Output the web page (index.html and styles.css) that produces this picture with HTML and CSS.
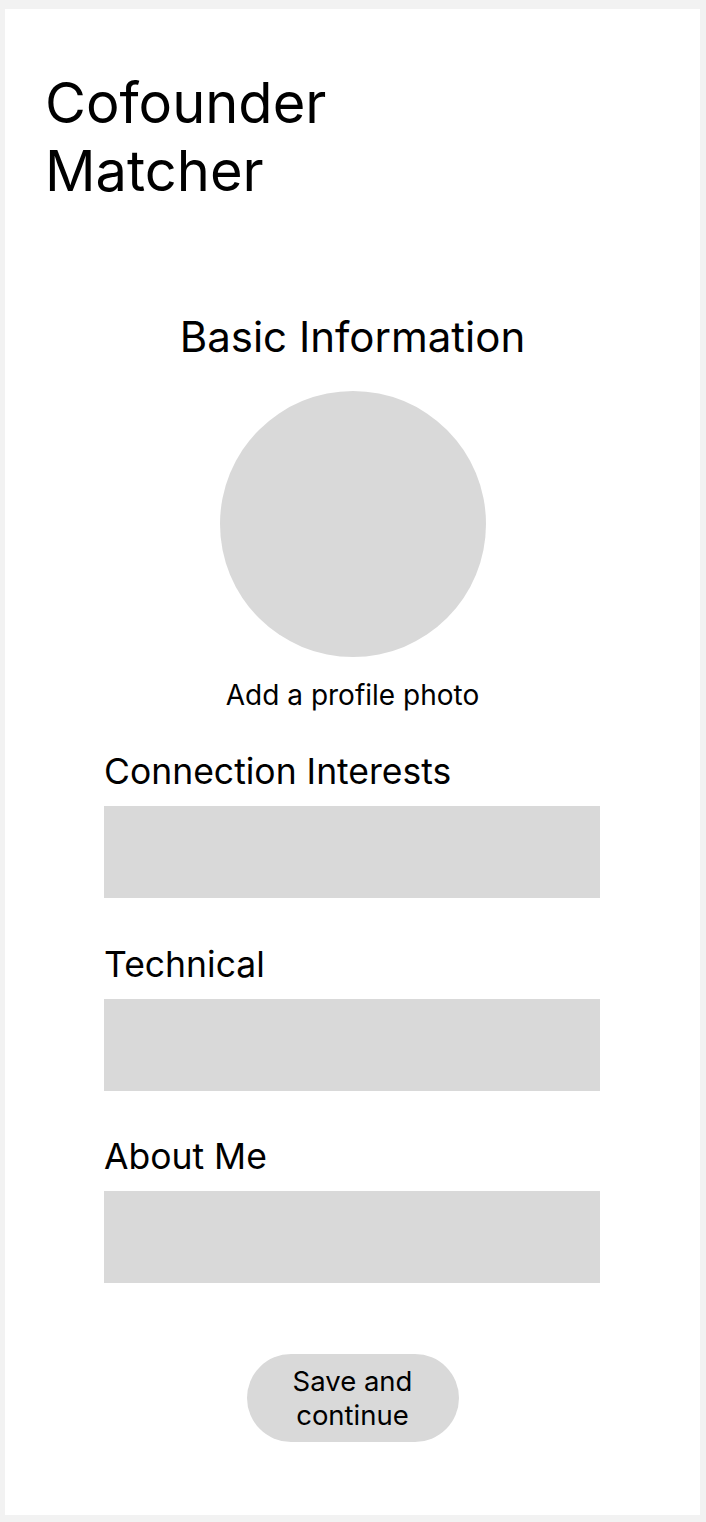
FILE: index.html
```html
<!DOCTYPE html>
<html lang="en">
<head>
<meta charset="utf-8">
<title>Cofounder Matcher</title>
<link rel="stylesheet" href="styles.css">
</head>
<body>
<main class="card">
  <h1 class="title">Cofounder<br>Matcher</h1>
  <section class="profile">
    <h2 class="section-title">Basic Information</h2>
    <div class="avatar"></div>
    <p class="avatar-label">Add a profile photo</p>
    <div class="fields">
      <div class="field">
        <label class="field-label">Connection Interests</label>
        <div class="field-box"></div>
      </div>
      <div class="field">
        <label class="field-label">Technical</label>
        <div class="field-box"></div>
      </div>
      <div class="field">
        <label class="field-label">About Me</label>
        <div class="field-box"></div>
      </div>
    </div>
    <button class="save-btn">Save and continue</button>
  </section>
</main>
</body>
</html>
```

FILE: styles.css
```css
html, body {
  margin: 0;
  padding: 0;
}
body {
  background: #f2f2f2;
  font-family: Inter, "Noto Sans", sans-serif;
  color: #000;
  padding: 9px 6px 7px 5px;
}
.card {
  background: #fff;
  width: 695px;
  height: 1506px;
  box-sizing: border-box;
  padding: 60px 0 0 40px;
}
.title {
  margin: 0;
  font-size: 56px;
  font-weight: 400;
  line-height: 68px;
}
.profile {
  margin-left: -40px;
  display: flex;
  flex-direction: column;
  align-items: center;
}
.section-title {
  margin: 106px 0 0;
  font-size: 42px;
  font-weight: 400;
  line-height: 51px;
}
.avatar {
  margin-top: 29px;
  width: 266px;
  height: 266px;
  border-radius: 50%;
  background: #d9d9d9;
}
.avatar-label {
  margin: 21px 0 0;
  font-size: 28px;
  line-height: 34px;
}
.fields {
  margin-top: 38px;
  margin-right: 1px;
  width: 496px;
  display: flex;
  flex-direction: column;
  gap: 44.5px;
}
.field {
  display: flex;
  flex-direction: column;
  gap: 13px;
}
.field-label {
  font-size: 35.5px;
  line-height: 43px;
}
.field-box {
  height: 92px;
  background: #d9d9d9;
}
.save-btn {
  margin-top: 71px;
  width: 212px;
  height: 88px;
  border: none;
  border-radius: 44px;
  background: #d9d9d9;
  font-family: Inter, "Noto Sans", sans-serif;
  font-size: 27.5px;
  line-height: 34px;
  color: #000;
  padding: 0 20px;
}
```
